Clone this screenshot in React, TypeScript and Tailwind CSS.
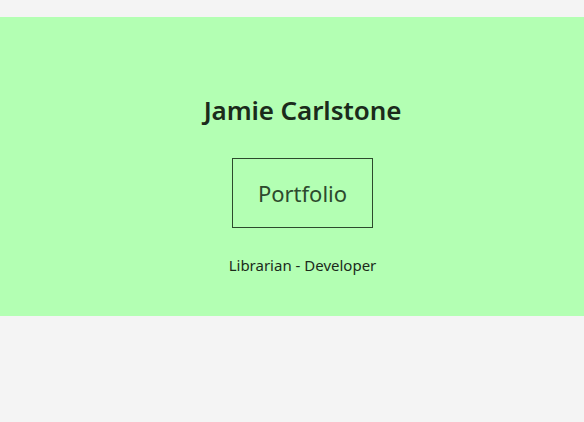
export default function App() {
    return (
        <div className="min-h-[422px] bg-[#f4f4f4] pt-[17px]" style={{ fontFamily: '"Noto Sans", "Open Sans", sans-serif' }}>
            <header className="bg-[#b3ffb3] h-[299px] flex flex-col items-center pt-[76px] pl-[21px]">
                <h1 className="text-[26px] leading-[34px] font-semibold text-[#1b2b1b] tracking-[-0.1px]">Jamie Carlstone</h1>
                <div className="mt-[31px] w-[141px] h-[70px] border border-[#2d4a2d] flex items-center justify-center">
                    <span className="text-[22px] text-[#2d4a2d]">Portfolio</span>
                </div>
                <p className="mt-[26px] text-[15px] text-[#1b2b1b]">Librarian - Developer</p>
            </header>
        </div>
    );
}
